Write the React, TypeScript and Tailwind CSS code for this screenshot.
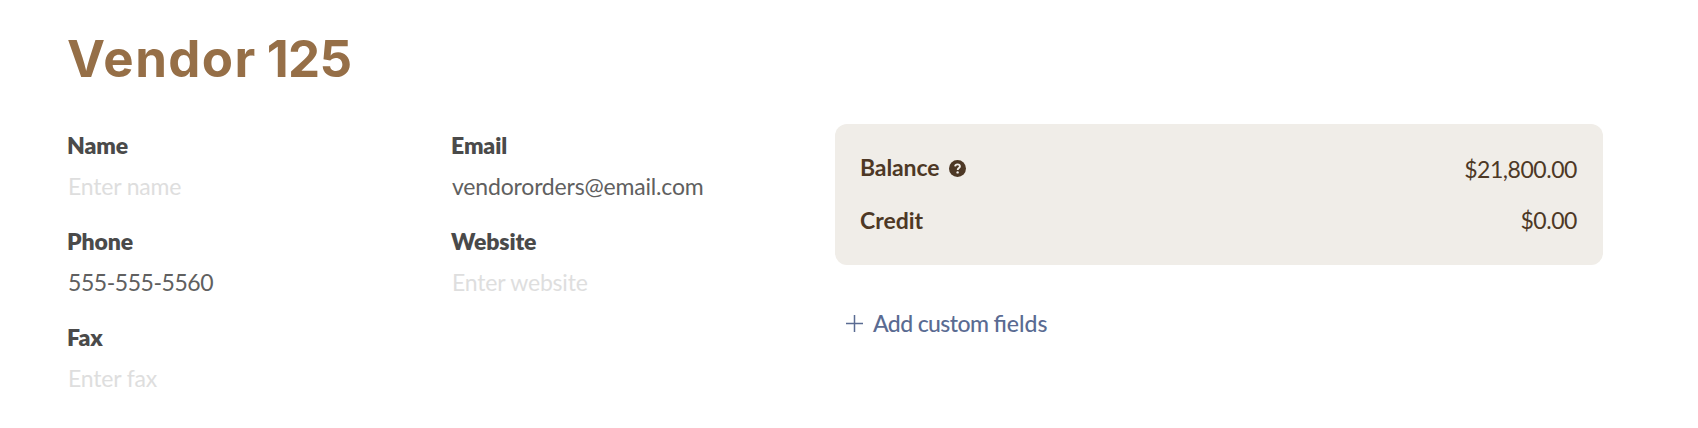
import React from 'react';

type Field = { label: string; value?: string; placeholder: string; numeric?: boolean };

const columns: Field[][] = [
  [
    { label: 'Name', placeholder: 'Enter name' },
    { label: 'Phone', value: '555-555-5560', placeholder: 'Enter phone', numeric: true },
    { label: 'Fax', placeholder: 'Enter fax' },
  ],
  [
    { label: 'Email', value: 'vendororders@email.com', placeholder: 'Enter email' },
    { label: 'Website', placeholder: 'Enter website' },
  ],
];

function VendorField({ label, value, placeholder, numeric }: Field) {
  return (
    <div className="h-24">
      <div className="text-[23px] leading-[30px] font-extrabold tracking-[-0.1px] text-[#4a4a4a]">{label}</div>
      <div
        className={`mt-[11px] pl-px text-[23px] leading-[30px] ${numeric ? 'tracking-[-0.45px]' : 'tracking-[-0.18px]'} ${
          value ? 'text-[#606060]' : 'text-[#dedede]'
        }`}
      >
        {value ?? placeholder}
      </div>
    </div>
  );
}

export default function App() {
  return (
    <div className="h-[428px] w-[1698px] overflow-hidden bg-white pt-[28px] pl-[67px] font-['Lato',sans-serif]">
      <h1 className="h-[96px] pt-px font-['Inter',sans-serif] text-[51px] leading-[60px] font-bold text-[#966f47]">
        <span className="tracking-[1.4px]">Vendor</span>
        <span className="tracking-[-0.6px] [word-spacing:-1.5px]"> 125</span>
      </h1>

      <div className="flex">
        {columns.map((fields, i) => (
          <div key={i} className="w-96 pt-[6px]">
            {fields.map((field) => (
              <VendorField key={field.label} {...field} />
            ))}
          </div>
        ))}

        <div className="w-[768px]">
          {/* Totals */}
          <div className="h-[141px] rounded-xl bg-[#f0ede8] pt-[28px] pr-[26px] pl-[25px] text-[23px] leading-[30px] text-[#4d3825]">
            <div className="flex items-start justify-between">
              <div className="flex items-center gap-[10px] font-bold tracking-[-0.1px]">
                Balance
                <svg className="mt-[3px] h-[17px] w-[17px]" viewBox="0 0 17 17">
                  <circle cx="8.5" cy="8.5" r="8.5" fill="#4d3825" />
                  <path d="M6.1 6.4c.2-1.3 1.1-2 2.4-2 1.4 0 2.4.8 2.4 2 0 1.6-2.2 1.7-2.2 3.5" fill="none" stroke="#f0ede8" strokeWidth="1.9" />
                  <circle cx="8.6" cy="12.4" r="1.2" fill="#f0ede8" />
                </svg>
              </div>
              <span className="pt-[2px] tracking-[-0.45px]">$21,800.00</span>
            </div>
            <div className="mt-[21px] flex justify-between">
              <span className="font-bold">Credit</span>
              <span className="tracking-[-0.45px]">$0.00</span>
            </div>
          </div>

          <button className="mt-[43px] ml-[11px] flex items-center gap-[10px] text-[23px] leading-[30px] font-medium text-[#5a6b92]">
            <svg className="mt-px h-[17px] w-[17px]" viewBox="0 0 17 17" stroke="currentColor" strokeWidth="1.5">
              <path d="M8.5 0v17M0 8.5h17" />
            </svg>
            {/* letter-spacing turns off the "fi" ligature, so the last word goes without it */}
            <span>
              <span className="tracking-[-0.6px]">Add custom </span>fields
            </span>
          </button>
        </div>
      </div>
    </div>
  );
}
